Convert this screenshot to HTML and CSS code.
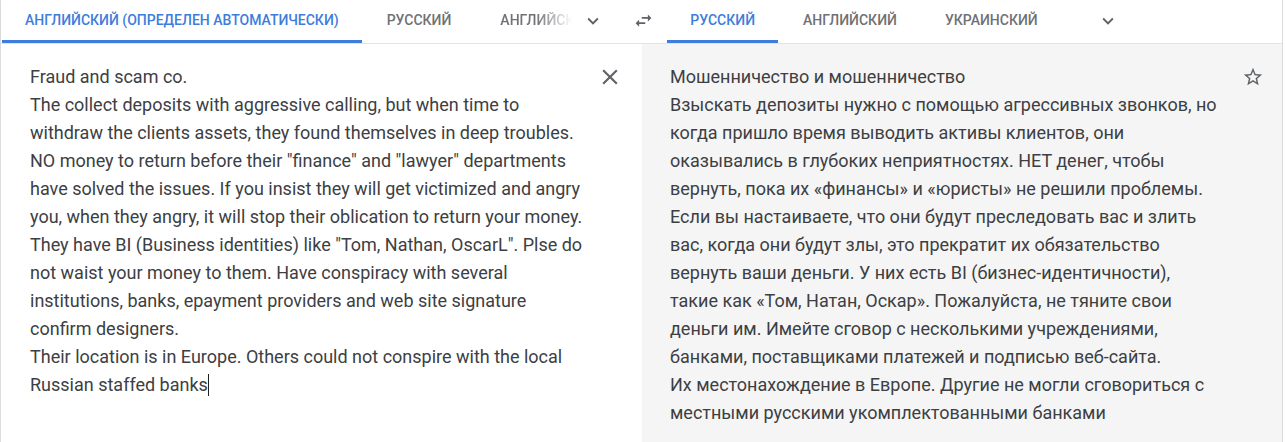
FILE: index.html
```html
<!DOCTYPE html>
<html lang="ru">
<head>
<meta charset="utf-8">
<title>Переводчик</title>
<link rel="stylesheet" href="styles.css">
</head>
<body>
<div class="app">
  <div class="tabbar">
    <div class="group group-src">
      <div class="tab active">АНГЛИЙСКИЙ (ОПРЕДЕЛЕН АВТОМАТИЧЕСКИ)</div>
      <div class="tab">РУССКИЙ</div>
      <div class="tab fade"><span>АНГЛИЙСКИЙ</span></div>
      <div class="icon-btn chevron">
        <svg viewBox="0 0 24 24" width="22" height="22"><path d="M16.59 8.59L12 13.17 7.41 8.59 6 10l6 6 6-6z"/></svg>
      </div>
    </div>
    <div class="icon-btn swap">
      <svg viewBox="0 0 24 24" width="21" height="21"><path d="M6.99 11L3 15l3.99 4v-3H14v-2H6.99v-3zM21 9l-4-4v3h-7v2h7v3l4-4z"/></svg>
    </div>
    <div class="group group-tgt">
      <div class="tab active">РУССКИЙ</div>
      <div class="tab">АНГЛИЙСКИЙ</div>
      <div class="tab">УКРАИНСКИЙ</div>
      <div class="icon-btn chevron2">
        <svg viewBox="0 0 24 24" width="22" height="22"><path d="M16.59 8.59L12 13.17 7.41 8.59 6 10l6 6 6-6z"/></svg>
      </div>
    </div>
  </div>
  <div class="panels">
    <div class="panel panel-src">
      <div class="text">Fraud and scam co.<br>The collect deposits with aggressive calling, but when time to<br>withdraw the clients assets, they found themselves in deep troubles.<br>NO money to return before their "finance" and "lawyer" departments<br>have solved the issues. If you insist they will get victimized and angry<br>you, when they angry, it will stop their oblication to return your money.<br>They have BI (Business identities) like "Tom, Nathan, OscarL". Plse do<br>not waist your money to them. Have conspiracy with several<br>institutions, banks, epayment providers and web site signature<br>confirm designers.<br>Their location is in Europe. Others could not conspire with the local<br>Russian staffed banks<span class="caret"></span></div>
      <div class="icon-btn close">
        <svg viewBox="0 0 24 24" width="26" height="26"><path d="M19 6.41L17.59 5 12 10.59 6.41 5 5 6.41 10.59 12 5 17.59 6.41 19 12 13.41 17.59 19 19 17.59 13.41 12z"/></svg>
      </div>
    </div>
    <div class="panel panel-tgt">
      <div class="text">Мошенничество и мошенничество<br>Взыскать депозиты нужно с помощью агрессивных звонков, но<br>когда пришло время выводить активы клиентов, они<br>оказывались в глубоких неприятностях. НЕТ денег, чтобы<br>вернуть, пока их «финансы» и «юристы» не решили проблемы.<br>Если вы настаиваете, что они будут преследовать вас и злить<br>вас, когда они будут злы, это прекратит их обязательство<br>вернуть ваши деньги. У них есть BI (бизнес-идентичности),<br>такие как «Том, Натан, Оскар». Пожалуйста, не тяните свои<br>деньги им. Имейте сговор с несколькими учреждениями,<br>банками, поставщиками платежей и подписью веб-сайта.<br>Их местонахождение в Европе. Другие не могли сговориться с<br>местными русскими укомплектованными банками</div>
      <div class="icon-btn star">
        <svg viewBox="0 0 24 24" width="22" height="22"><path d="M22 9.24l-7.19-.62L12 2 9.19 8.63 2 9.24l5.46 4.73L5.82 21 12 17.27 18.18 21l-1.63-7.03L22 9.24zM12 15.4l-3.76 2.27 1-4.28-3.32-2.88 4.38-.38L12 6.1l1.71 4.04 4.38.38-3.32 2.88 1 4.28L12 15.4z"/></svg>
      </div>
    </div>
  </div>
</div>
</body>
</html>
```

FILE: styles.css
```css
html, body {
  margin: 0;
  padding: 0;
  background: #ffffff;
}

body {
  font-family: Roboto, "Noto Sans", Arial, sans-serif;
  color: #3c4043;
  width: 1285px;
  height: 442px;
  overflow: hidden;
}

.app {
  width: 1281px;
  height: 442px;
  border-left: 1px solid #dadce0;
  border-right: 1px solid #dadce0;
  display: flex;
  flex-direction: column;
}

.tabbar {
  height: 43px;
  border-bottom: 1px solid #e3e3e3;
  display: flex;
  padding-left: 1px;
  box-shadow: 0 1px 1px rgba(0,0,0,0.04);
}

.group {
  display: flex;
  align-items: stretch;
  flex-shrink: 0;
}

.group-tgt {
  margin-left: 13px;
}

.tab {
  flex-shrink: 0;
  padding: 0 23px;
  margin-right: 2px;
  font-size: 14px;
  font-weight: 500;
  color: #6f7175;
  display: flex;
  align-items: center;
  border-bottom: 3px solid transparent;
  box-sizing: border-box;
  height: 43px;
  white-space: nowrap;
}

.tab.active {
  color: #3d7ddd;
  border-bottom-color: #3d7ddd;
}

.tab.fade {
  width: 106px;
  overflow: hidden;
  padding-right: 0;
  padding-left: 24px;
  margin-right: 0;
}

.tab.fade span {
  display: block;
  width: 72px;
  overflow: hidden;
  -webkit-mask-image: linear-gradient(to right, #000 50%, transparent 100%);
  mask-image: linear-gradient(to right, #000 50%, transparent 100%);
}

.icon-btn {
  flex-shrink: 0;
  display: flex;
  align-items: center;
  justify-content: center;
  fill: #5f6368;
}

.chevron {
  width: 22px;
  padding-bottom: 2px;
}

.swap {
  width: 22px;
  margin-left: 28px;
  padding-bottom: 2px;
}

.chevron2 {
  width: 22px;
  margin-left: 34px;
  padding-bottom: 2px;
}

.panels {
  flex: 1;
  display: flex;
}

.panel {
  display: flex;
  justify-content: space-between;
  align-items: flex-start;
  box-sizing: border-box;
}

.panel-src {
  width: 641px;
  padding: 19px 19px 0 29px;
  background: #ffffff;
}

.panel-tgt {
  flex: 1;
  padding: 19px 18px 0 28px;
  background: #f5f5f5;
}

.text {
  font-size: 18px;
  line-height: 28px;
  white-space: nowrap;
  color: #3c4043;
}

.caret {
  display: inline-block;
  width: 0;
  height: 22px;
  border-left: 1px solid #202124;
  vertical-align: -5px;
}

.close {
  width: 26px;
  height: 28px;
  fill: #5f6368;
}

.star {
  width: 22px;
  height: 28px;
  fill: #5f6368;
}
```
